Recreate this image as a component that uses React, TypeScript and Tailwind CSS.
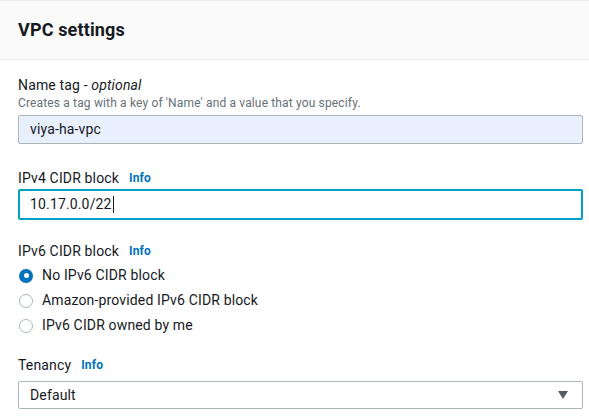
import React from 'react';

const FONT = "font-['Roboto','Liberation_Sans',sans-serif]";

function InfoLink() {
  return <span className="ml-[10px] text-[12px] font-bold text-[#0073bb]">Info</span>;
}

function Radio({ label, checked = false }: { label: string; checked?: boolean }) {
  return (
    <div className="flex h-[25px] items-center">
      {checked ? (
        <span className="ml-px flex h-[14px] w-[14px] items-center justify-center rounded-full bg-[#0073bb]">
          <span className="h-[5px] w-[5px] rounded-full bg-white" />
        </span>
      ) : (
        <span className="ml-px h-[14px] w-[14px] rounded-full border border-[#aab7b8] bg-white" />
      )}
      <span className="ml-[9px] text-[14px] text-[#16191f]">{label}</span>
    </div>
  );
}

export default function App() {
  return (
    <div className={`${FONT} h-[416px] w-[589px] overflow-hidden bg-white tracking-[0.15px] text-[#16191f]`}>
      {/* Container header */}
      <div className="flex h-[60px] items-center border-y border-[#eaeded] bg-[#fafafa] px-[18px]">
        <h2 className="text-[18px] font-bold leading-6">VPC settings</h2>
      </div>

      <div className="pl-[18px] pr-[6px] pt-[15px]">
        {/* Name tag */}
        <div className="text-[14px] leading-5">
          Name tag - <span className="italic">optional</span>
        </div>
        <div className="text-[12px] leading-4 text-[#687078]">
          Creates a tag with a key of 'Name' and a value that you specify.
        </div>
        <div className="mt-[4px] flex h-[29px] items-center rounded-[2px] border border-[#aab7b8] bg-[#e8f0fe] px-[11px] text-[14px]">
          viya-ha-vpc
        </div>

        {/* IPv4 */}
        <div className="mt-[24px] flex items-center text-[14px] leading-5">
          IPv4 CIDR block
          <InfoLink />
        </div>
        <div className="mt-[1px] flex h-[31px] items-center rounded-[2px] border-2 border-[#00a1c9] px-[10px] text-[14px]">
          10.17.0.0/22
          <span className="ml-px h-[17px] w-px bg-[#16191f]" />
        </div>

        {/* IPv6 */}
        <div className="mt-[21px] flex items-center text-[14px] leading-5">
          IPv6 CIDR block
          <InfoLink />
        </div>
        <div className="mt-[2px]">
          <Radio label="No IPv6 CIDR block" checked />
          <Radio label="Amazon-provided IPv6 CIDR block" />
          <Radio label="IPv6 CIDR owned by me" />
        </div>

        {/* Tenancy */}
        <div className="mt-[17px] flex items-center text-[14px] leading-5">
          Tenancy
          <InfoLink />
        </div>
        <div className="mt-[6px] flex h-[28px] items-center justify-between rounded-[2px] border border-[#aab7b8] pl-[11px] pr-[14px] text-[14px]">
          <span>Default</span>
          <svg width="10" height="8" viewBox="0 0 10 8" aria-hidden="true">
            <path d="M0 0h10L5 8z" fill="#545b64" />
          </svg>
        </div>
      </div>
    </div>
  );
}
